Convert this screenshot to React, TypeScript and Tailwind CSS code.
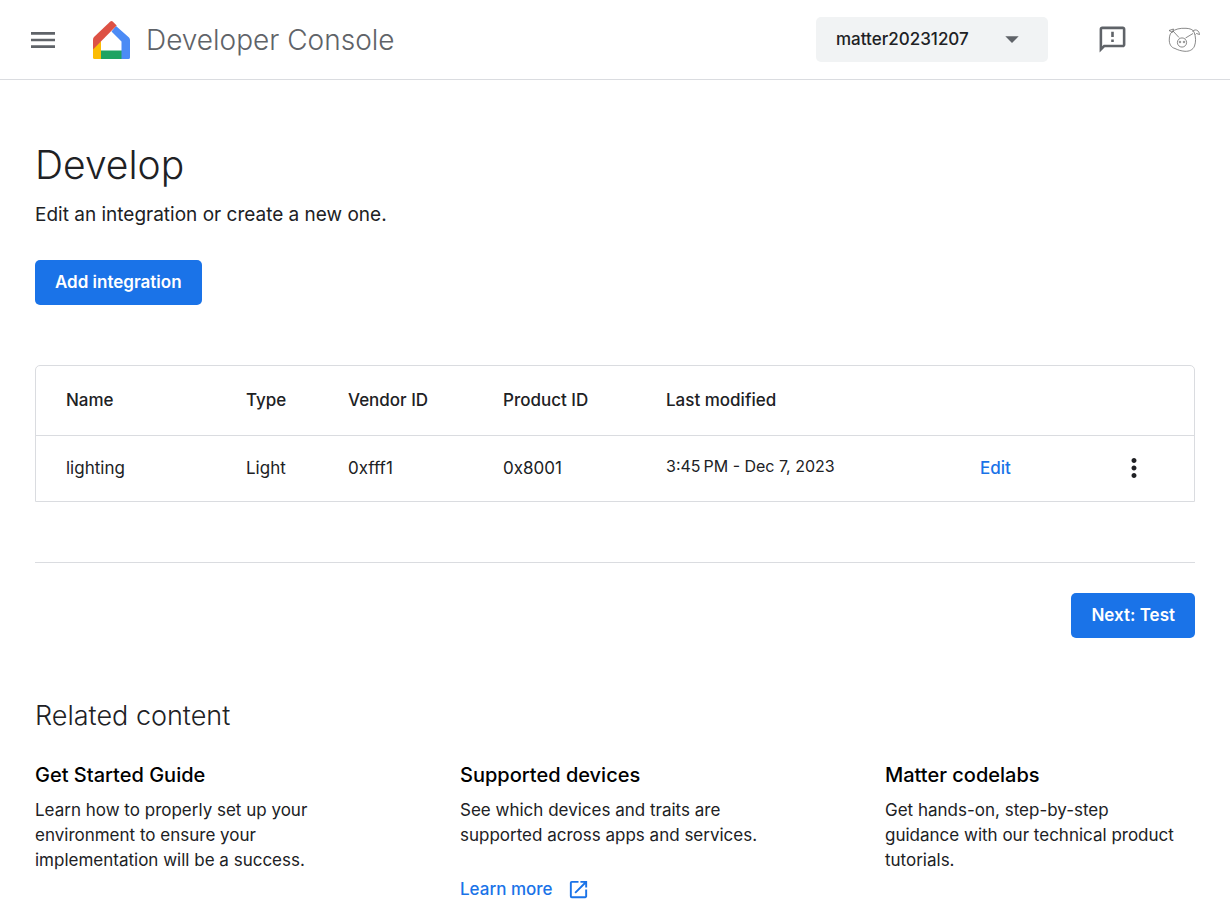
import { MdArrowDropDown, MdMenu, MdMoreVert, MdOpenInNew, MdOutlineFeedback } from "react-icons/md";

type Integration = {
  name: string;
  type: string;
  vendorId: string;
  productId: string;
  modified: string;
};

type Resource = { title: string; body: string; link?: string };

const integrations: Integration[] = [
  { name: "lighting", type: "Light", vendorId: "0xfff1", productId: "0x8001", modified: "3:45\u202fPM - Dec 7, 2023" },
];

const resources: Resource[] = [
  {
    title: "Get Started Guide",
    body: "Learn how to properly set up your environment to ensure your implementation will be a success.",
  },
  {
    title: "Supported devices",
    body: "See which devices and traits are supported across apps and services.",
    link: "Learn more",
  },
  {
    title: "Matter codelabs",
    body: "Get hands-on, step-by-step guidance with our technical product tutorials.",
  },
];

function HomeLogo() {
  return (
    <svg viewBox="0 0 37 38" className="h-[38px] w-[37px] shrink-0" aria-hidden="true">
      <path fill="#fbbc04" d="M0 27 8 20V38H1.500Q0 38 0 36.500Z" />
      <path fill="#1ea362" d="M8 29.500H29V38H8Z" />
      <path fill="#4c8bf5" d="M23 5 36 16.500Q37 17.500 37 19V36.500Q37 38 35.500 38H28.500V20.500L18.500 10.500Z" />
      <path fill="#dd5144" d="M17.300.5Q18.500-.5 19.700.5L23.700 4.500 0 28.500V18.500Q0 17 1 16Z" />
    </svg>
  );
}

function Avatar() {
  return (
    <svg viewBox="0 0 34 28" className="h-7 w-[34px]" fill="none" stroke="#6b6b6b" strokeWidth="0.8" aria-hidden="true">
      <path d="M5 6C8 3 13 2 19 2.300C23 2.500 26 3.500 27 6C29 11 29 16 27.500 20C26 24 22 25.500 18 25.300C14 25 11 24 8 22.500C4 21.500 2 18 2.300 13C2.500 10 3 7.500 5 6Z" />
      <path d="M2 4.500 6.500 3 5.500 6.500M2 4.500 5 6M6 5 12 11.500M26 7.500 18.500 12" />
      <path d="M25.500 5.500C27 3.500 29.500 3.500 31 5C32 6 32.500 7.500 32.500 8.500L29.500 7.500 28.500 8.500" />
      <circle cx="15" cy="16.500" r="4.600" />
      <circle cx="13" cy="16" r="0.800" />
      <circle cx="17" cy="16" r="0.800" />
    </svg>
  );
}

function Header() {
  return (
    <header className="flex h-20 items-center border-b border-[#dadce0] pr-[29px] pl-[27px]">
      <button type="button" aria-label="Main menu" className="text-[#5f6368]">
        <MdMenu size={32} />
      </button>
      <a href="#home" className="ml-[34px] flex items-center gap-4 text-[#5f6368]">
        <HomeLogo />
        <span className="text-[28px] font-[350]">Developer Console</span>
      </a>
      <div className="relative ml-auto">
        <select
          aria-label="Project"
          className="h-[45px] w-[232px] appearance-none rounded-[5px] bg-[#f1f3f4] px-5 text-[17px] font-medium text-[#202124]"
        >
          <option>matter20231207</option>
        </select>
        <MdArrowDropDown size={32} className="pointer-events-none absolute top-[6px] right-5 text-[#5f6368]" />
      </div>
      <button type="button" aria-label="Send feedback" className="ml-[49px] text-[#5f6368]">
        <MdOutlineFeedback size={31} />
      </button>
      <button type="button" aria-label="Account" className="ml-[39px]">
        <Avatar />
      </button>
    </header>
  );
}

function IntegrationTable() {
  return (
    <div className="mt-[60px] overflow-x-auto rounded-t-[5px] border border-[#dadce0]">
      <table className="w-full table-fixed text-left text-[17px]">
        <colgroup>
          <col className="w-[210px]" />
          <col className="w-[102px]" />
          <col className="w-[155px]" />
          <col className="w-[163px]" />
          <col className="w-[314px]" />
          <col className="w-[139px]" />
          <col />
        </colgroup>
        <thead>
          <tr className="h-[69px] border-b border-[#dadce0]">
            <th scope="col" className="pl-[30px] font-medium">Name</th>
            <th scope="col" className="font-medium">Type</th>
            <th scope="col" className="font-medium">Vendor ID</th>
            <th scope="col" className="font-medium">Product ID</th>
            <th scope="col" className="font-medium">Last modified</th>
            <td />
            <td />
          </tr>
        </thead>
        <tbody>
          {integrations.map((item) => (
            <tr key={item.name} className="h-[66px]">
              <td className="pl-[30px]">{item.name}</td>
              <td>{item.type}</td>
              <td>{item.vendorId}</td>
              <td>{item.productId}</td>
              <td className="pb-1 text-[16px]">{item.modified}</td>
              <td>
                <a href="#edit" className="font-medium text-[#1a73e8]">Edit</a>
              </td>
              <td>
                <button type="button" aria-label="More options" className="block">
                  <MdMoreVert size={30} />
                </button>
              </td>
            </tr>
          ))}
        </tbody>
      </table>
    </div>
  );
}

function ResourceCard({ title, body, link }: Resource) {
  return (
    <article>
      <h3 className="text-[20px] leading-[25px] font-medium text-black">{title}</h3>
      <p className="mt-[10px] max-w-[300px] text-[17px] leading-[25px]">{body}</p>
      {link && (
        <a href="#learn-more" className="mt-[30px] flex items-center gap-3.5 text-[17px] leading-[23px] font-medium text-[#1a73e8]">
          {link}
          <MdOpenInNew size={23} />
        </a>
      )}
    </article>
  );
}

export default function App() {
  return (
    <div className="bg-white font-['Inter',sans-serif] text-[#202124]">
      <Header />
      <main className="px-[35px] pt-[60px]">
        <h1 className="text-[39px] leading-[50px] font-[350]">Develop</h1>
        <p className="mt-3 text-[19px] leading-[25px]">Edit an integration or create a new one.</p>
        <button type="button" className="mt-[33px] h-[45px] rounded-[5px] bg-[#1a73e8] px-5 text-[17px] font-semibold text-white">
          Add integration
        </button>
        <IntegrationTable />
        <div className="mt-[60px] flex justify-end border-t border-[#dadce0] pt-[30px]">
          <button type="button" className="h-[45px] rounded-[5px] bg-[#1a73e8] px-5 text-[17px] font-semibold text-white">
            Next: Test
          </button>
        </div>
        <section className="mt-[60px]">
          <h2 className="text-[27px] leading-[35px] font-[350]">Related content</h2>
          <div className="mt-[30px] grid grid-cols-3 gap-[115px]">
            {resources.map((item) => (
              <ResourceCard key={item.title} {...item} />
            ))}
          </div>
        </section>
      </main>
    </div>
  );
}
